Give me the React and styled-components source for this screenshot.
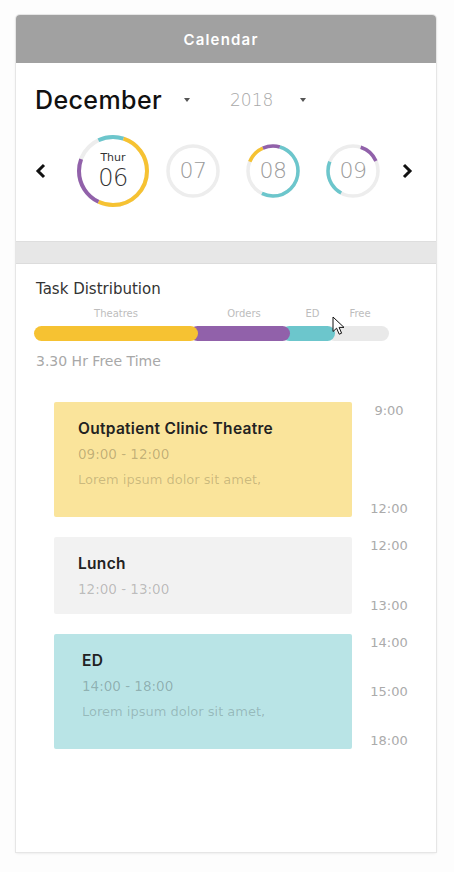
import styled, { createGlobalStyle } from 'styled-components';

const GlobalStyle = createGlobalStyle`
  body {
    margin: 0;
    background: #fdfdfd;
    font-family: "DejaVu Sans", "Noto Sans", sans-serif;
  }
`;

const Page = styled.div`
  padding: 15px 18px 20px 16px;
`;

const Card = styled.div`
  width: 420px;
  height: 837px;
  background: #fff;
  border-radius: 4px 4px 0 0;
  box-shadow: 0 0 0 1px #e6e6e6, 0 1px 3px rgba(0, 0, 0, 0.12);
  display: flex;
  flex-direction: column;
`;

const Header = styled.div`
  height: 48px;
  flex: none;
  background: #a1a1a1;
  border-radius: 4px 4px 0 0;
  color: #fff;
  font-family: Inter, "DejaVu Sans", sans-serif;
  font-size: 15px;
  font-weight: 600;
  letter-spacing: 1.2px;
  display: flex;
  align-items: center;
  justify-content: center;
  padding-right: 10px;
`;

const DateSection = styled.div`
  height: 178px;
  flex: none;
  padding-top: 22px;
  box-sizing: border-box;
`;

const MonthRow = styled.div`
  display: flex;
  align-items: center;
  height: 30px;
  padding-left: 19px;
`;

const Select = styled.div`
  display: flex;
  align-items: center;
  width: ${p => p.$width}px;
  color: ${p => p.$color};
  font-size: ${p => p.$size}px;
  font-weight: ${p => p.$weight};
  font-family: ${p => p.$font};
  letter-spacing: ${p => p.$spacing || 0}px;
`;

const Caret = styled.span`
  width: 0;
  height: 0;
  margin-left: ${p => p.$gap}px;
  border-left: 3px solid transparent;
  border-right: 3px solid transparent;
  border-top: 4px solid #555;
`;

const DaysRow = styled.div`
  display: flex;
  align-items: center;
  margin-top: 18px;
  height: 76px;
  padding-left: 19px;
`;

const Chevron = styled.svg`
  width: 12px;
  height: 18px;
  flex: none;
`;

const Days = styled.div`
  display: flex;
  align-items: center;
  margin: 0 8px 0 26px;
`;

const DaySlot = styled.div`
  width: 80px;
  display: grid;
  place-items: center;
  & > * {
    grid-area: 1 / 1;
  }
`;

const DayText = styled.div`
  display: flex;
  flex-direction: column;
  align-items: center;
  color: ${p => (p.$active ? '#333' : '#9a9a9a')};
`;

const Weekday = styled.span`
  font-size: 11px;
  line-height: 14px;
`;

const DayNum = styled.span`
  font-size: ${p => (p.$active ? 24 : 22)}px;
  line-height: 26px;
  font-weight: 300;
  letter-spacing: -0.5px;
`;

const Band = styled.div`
  height: 21px;
  flex: none;
  background: #e7e7e7;
  border-top: 1px solid #dedede;
`;

const TaskSection = styled.div`
  position: relative;
  flex: 1;
  border-top: 1px solid #dcdcdc;
  padding: 15px 0 0 18px;
`;

const SectionTitle = styled.div`
  font-size: 15px;
  line-height: 21px;
  color: #333;
  margin-left: 2px;
`;

const LegendRow = styled.div`
  display: flex;
  margin-top: 8px;
`;

const Legend = styled.div`
  width: ${p => p.$width}px;
  text-align: center;
  font-size: 10px;
  line-height: 12px;
  color: #bdbdbd;
`;

const Bar = styled.div`
  display: flex;
  height: 15px;
  margin-top: 6px;
`;

const Segment = styled.div`
  position: relative;
  width: ${p => p.$width}px;
  z-index: ${p => p.$layer};
  background: ${p => p.$color};
  border-radius: 8px;
  & + & {
    margin-left: -8px;
  }
`;

const FreeTime = styled.div`
  margin-top: 10px;
  font-size: 14px;
  line-height: 20px;
  color: #a8a8a8;
  margin-left: 2px;
`;

const Timeline = styled.div`
  display: grid;
  grid-template-columns: 298px 74px;
  row-gap: 20px;
  margin: 31px 0 0 20px;
`;

const Event = styled.div`
  height: ${p => p.$height}px;
  background: ${p => p.$bg};
  border-radius: 2px;
  box-sizing: border-box;
  padding: 17px 0 0 ${p => p.$inset}px;
`;

const EventTitle = styled.div`
  font-family: Inter, "DejaVu Sans", sans-serif;
  font-size: 15.5px;
  line-height: 20px;
  font-weight: 600;
  letter-spacing: 0.3px;
  color: #222;
`;

const EventTime = styled.div`
  margin-top: 5px;
  font-size: 13.5px;
  line-height: 20px;
  color: rgba(0, 0, 0, 0.24);
`;

const EventNote = styled.div`
  margin-top: 6px;
  font-size: 13px;
  line-height: 20px;
  color: rgba(0, 0, 0, 0.2);
`;

const Hours = styled.div`
  display: flex;
  flex-direction: column;
  justify-content: space-between;
  align-items: center;
`;

const Hour = styled.span`
  font-size: 13px;
  line-height: 17px;
  color: #ababab;
`;

const Pointer = styled.svg`
  position: absolute;
  left: 316px;
  top: 52px;
  width: 14px;
  height: 20px;
  z-index: 5;
`;

const splitArcs = arcs =>
  arcs.flatMap(a => {
    const from = ((a.from % 360) + 360) % 360;
    const to = from + (a.to - a.from);
    return to > 360
      ? [{ from, to: 360, color: a.color }, { from: 0, to: to - 360, color: a.color }]
      : [{ from, to, color: a.color }];
  });

const Ring = ({ size, r, width, arcs }) => {
  const c = 2 * Math.PI * r;
  const mid = size / 2;
  return (
    <svg width={size} height={size} viewBox={`0 0 ${size} ${size}`}>
      <circle cx={mid} cy={mid} r={r} fill="none" stroke="#ededed" strokeWidth={width} />
      <g transform={`rotate(-90 ${mid} ${mid})`}>
        {splitArcs(arcs).map((a, i) => (
          <circle
            key={i}
            cx={mid}
            cy={mid}
            r={r}
            fill="none"
            stroke={a.color}
            strokeWidth={width}
            strokeDasharray={`${((a.to - a.from) / 360) * c} ${c}`}
            strokeDashoffset={-((a.from / 360) * c)}
          />
        ))}
      </g>
    </svg>
  );
};

const YELLOW = '#f6c232';
const PURPLE = '#9161aa';
const TEAL = '#6cc6cc';

const days = [
  {
    num: '06',
    weekday: 'Thur',
    active: true,
    arcs: [
      { from: -26, to: 18, color: TEAL },
      { from: 18, to: 205, color: YELLOW },
      { from: 205, to: 290, color: PURPLE },
    ],
  },
  { num: '07', arcs: [] },
  {
    num: '08',
    arcs: [
      { from: 290, to: 334, color: YELLOW },
      { from: 334, to: 376, color: PURPLE },
      { from: 16, to: 205, color: TEAL },
    ],
  },
  {
    num: '09',
    arcs: [
      { from: 18, to: 66, color: PURPLE },
      { from: 207, to: 290, color: TEAL },
    ],
  },
];

const segments = [
  { label: 'Theatres', color: YELLOW, width: 164, legend: 164 },
  { label: 'Orders', color: PURPLE, width: 100, legend: 92 },
  { label: 'ED', color: TEAL, width: 53, legend: 45 },
  { label: 'Free', color: '#e9e9e9', width: 62, legend: 50 },
];

const events = [
  {
    title: 'Outpatient Clinic Theatre',
    time: '09:00 - 12:00',
    note: 'Lorem ipsum dolor sit amet,',
    bg: '#fae49b',
    height: 115,
    inset: 24,
    hours: ['9:00', '12:00'],
  },
  {
    title: 'Lunch',
    time: '12:00 - 13:00',
    bg: '#f2f2f2',
    height: 77,
    inset: 24,
    hours: ['12:00', '13:00'],
  },
  {
    title: 'ED',
    time: '14:00 - 18:00',
    note: 'Lorem ipsum dolor sit amet,',
    bg: '#b9e4e6',
    height: 115,
    inset: 28,
    hours: ['14:00', '15:00', '18:00'],
  },
];

const App = () => {
  return (
    <>
      <GlobalStyle />
      <Page>
        <Card>
          <Header>Calendar</Header>
          <DateSection>
            <MonthRow>
              <Select $width={195} $color="#111" $size={25} $weight={500} $spacing={0.4} $font='Inter, "DejaVu Sans", sans-serif'>
                December
                <Caret $gap={22} />
              </Select>
              <Select $color="#a8a8a8" $size={17} $weight={300}>
                2018
                <Caret $gap={27} />
              </Select>
            </MonthRow>
            <DaysRow>
              <Chevron viewBox="0 0 12 18">
                <polyline points="9,3 3,9 9,15" fill="none" stroke="#111" strokeWidth="3" />
              </Chevron>
              <Days>
                {days.map(d => (
                  <DaySlot key={d.num}>
                    {d.active ? (
                      <Ring size={76} r={34} width={4} arcs={d.arcs} />
                    ) : (
                      <Ring size={56} r={25} width={3.5} arcs={d.arcs} />
                    )}
                    <DayText $active={d.active}>
                      {d.weekday && <Weekday>{d.weekday}</Weekday>}
                      <DayNum $active={d.active}>{d.num}</DayNum>
                    </DayText>
                  </DaySlot>
                ))}
              </Days>
              <Chevron viewBox="0 0 12 18">
                <polyline points="3,3 9,9 3,15" fill="none" stroke="#111" strokeWidth="3" />
              </Chevron>
            </DaysRow>
          </DateSection>
          <Band />
          <TaskSection>
            <SectionTitle>Task Distribution</SectionTitle>
            <LegendRow>
              {segments.map(s => (
                <Legend key={s.label} $width={s.legend}>{s.label}</Legend>
              ))}
            </LegendRow>
            <Bar>
              {segments.map((s, i) => (
                <Segment key={s.label} $width={s.width} $color={s.color} $layer={segments.length - i} />
              ))}
            </Bar>
            <FreeTime>3.30 Hr Free Time</FreeTime>
            <Timeline>
              {events.map(e => [
                <Event key={e.title} $bg={e.bg} $height={e.height} $inset={e.inset}>
                  <EventTitle>{e.title}</EventTitle>
                  <EventTime>{e.time}</EventTime>
                  {e.note && <EventNote>{e.note}</EventNote>}
                </Event>,
                <Hours key={e.title + '-h'}>
                  {e.hours.map(h => <Hour key={h}>{h}</Hour>)}
                </Hours>,
              ])}
            </Timeline>
            <Pointer viewBox="0 0 14 20">
              <path d="M1 1 L1 15.5 L4.6 12.2 L7.2 18.2 L9.6 17.2 L7.1 11.4 L12 11.4 Z" fill="#fff" stroke="#111" strokeWidth="1" strokeLinejoin="round" />
            </Pointer>
          </TaskSection>
        </Card>
      </Page>
    </>
  );
};

export default App;
